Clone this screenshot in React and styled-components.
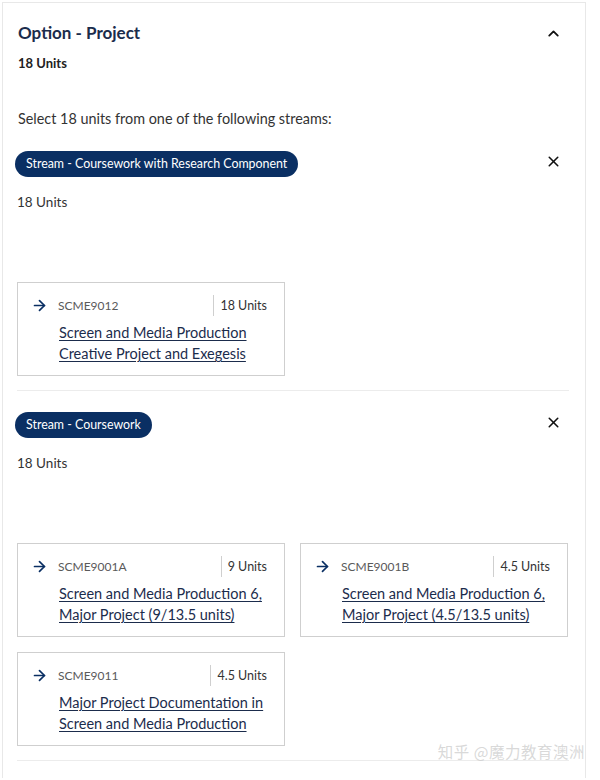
import React from 'react'
import styled, { createGlobalStyle } from 'styled-components'
import { ArrowRight, ChevronUp, X } from 'lucide-react'

const GlobalStyle = createGlobalStyle`
  html, body {
    margin: 0;
    padding: 0;
    background: #fff;
    font-family: Lato, "Noto Sans", "Liberation Sans", sans-serif;
    color: #333;
  }
`

const Panel = styled.section`
  position: relative;
  width: 584px;
  margin: 2px 0 0 2px;
  border: 1px solid #e8e8e8;
  border-bottom: none;
  padding: 18px 16px 16px 14px;
  box-sizing: border-box;
  min-height: 776px;
`

const Header = styled.header`
  display: flex;
  align-items: center;
  justify-content: space-between;
  padding-left: 1px;
`

const Title = styled.h2`
  margin: 0;
  font-size: 17px;
  line-height: 22px;
  font-weight: 700;
  color: #1b2c4c;
`

const IconButton = styled.button`
  display: flex;
  align-items: center;
  justify-content: center;
  width: 24px;
  height: 24px;
  margin: ${p => (p.$raised ? '-6px 4px 0 0' : '0 4px 0 0')};
  padding: 0;
  border: none;
  background: none;
  color: #111;
`

const Credit = styled.div`
  margin-top: 10px;
  padding-left: 1px;
  font-size: 13px;
  font-weight: 700;
  color: #222;
`

const Intro = styled.p`
  margin: 39px 0 0 1px;
  font-size: 14.4px;
  color: #333;
`

const Stream = styled.div`
  padding: ${p => (p.$first ? '24px' : '21px')} 0 14px;
  border-bottom: 1px solid #ececec;
`

const StreamHead = styled.div`
  display: flex;
  align-items: center;
  justify-content: space-between;
  margin-left: -2px;
`

const Pill = styled.span`
  display: inline-block;
  background: #0a2f63;
  color: #fff;
  font-size: 12.4px;
  line-height: 26px;
  padding: 0 11px;
  border-radius: 13px;
`

const StreamUnits = styled.div`
  margin-top: 17px;
  font-size: 13.5px;
  color: #333;
`

const Grid = styled.div`
  display: grid;
  grid-template-columns: 268px 268px;
  column-gap: 15px;
  row-gap: 15px;
  margin-top: 72px;
`

const Card = styled.a`
  display: block;
  border: 1px solid #cfcfcf;
  padding: 12px 17px 11px 14px;
  min-height: 66px;
  text-decoration: none;
`

const CardTop = styled.div`
  display: flex;
  align-items: center;
  height: 20px;
`

const Arrow = styled.span`
  display: flex;
  width: 27px;
  margin-left: -1px;
  color: #0a2f63;
`

const Code = styled.span`
  flex: 1;
  font-size: 12px;
  color: #5a5a5a;
`

const Units = styled.span`
  border-left: 1px solid #cfcfcf;
  padding: 1px 0 0 6px;
  line-height: 20px;
  font-size: 12.5px;
  color: #333;
`

const CardTitle = styled.div`
  margin: 7px 0 0 27px;
  font-size: 14.5px;
  line-height: 21px;
  color: #1b2c4c;
  text-decoration: underline;
  text-underline-offset: 2px;
`

const Watermark = styled.div`
  position: absolute;
  right: 0;
  bottom: 16px;
  font-family: "Noto Sans CJK SC", sans-serif;
  font-size: 15.5px;
  color: rgba(200, 200, 200, 0.7);
  letter-spacing: 0.5px;
`

const streams = [
  {
    name: 'Stream - Coursework with Research Component',
    units: '18 Units',
    courses: [
      { code: 'SCME9012', units: '18 Units', title: ['Screen and Media Production', 'Creative Project and Exegesis'] },
    ],
  },
  {
    name: 'Stream - Coursework',
    units: '18 Units',
    courses: [
      { code: 'SCME9001A', units: '9 Units', title: ['Screen and Media Production 6,', 'Major Project (9/13.5 units)'] },
      { code: 'SCME9001B', units: '4.5 Units', title: ['Screen and Media Production 6,', 'Major Project (4.5/13.5 units)'] },
      { code: 'SCME9011', units: '4.5 Units', title: ['Major Project Documentation in', 'Screen and Media Production'] },
    ],
  },
]

const Course = ({ code, units, title }) => (
  <Card href="#">
    <CardTop>
      <Arrow><ArrowRight size={17} strokeWidth={2.4} /></Arrow>
      <Code>{code}</Code>
      <Units>{units}</Units>
    </CardTop>
    <CardTitle>
      {title[0]}<br />{title[1]}
    </CardTitle>
  </Card>
)

export default function App() {
  return (
    <Panel>
      <GlobalStyle />
      <Header>
        <Title>Option - Project</Title>
        <IconButton><ChevronUp size={17} strokeWidth={2.6} /></IconButton>
      </Header>
      <Credit>18 Units</Credit>
      <Intro>Select 18 units from one of the following streams:</Intro>
      {streams.map((s, i) => (
        <Stream key={s.name} $first={i === 0}>
          <StreamHead>
            <Pill>{s.name}</Pill>
            <IconButton $raised><X size={17} strokeWidth={2.2} /></IconButton>
          </StreamHead>
          <StreamUnits>{s.units}</StreamUnits>
          <Grid>
            {s.courses.map(c => <Course key={c.code} {...c} />)}
          </Grid>
        </Stream>
      ))}
      <Watermark>知乎 @魔力教育澳洲</Watermark>
    </Panel>
  )
}
